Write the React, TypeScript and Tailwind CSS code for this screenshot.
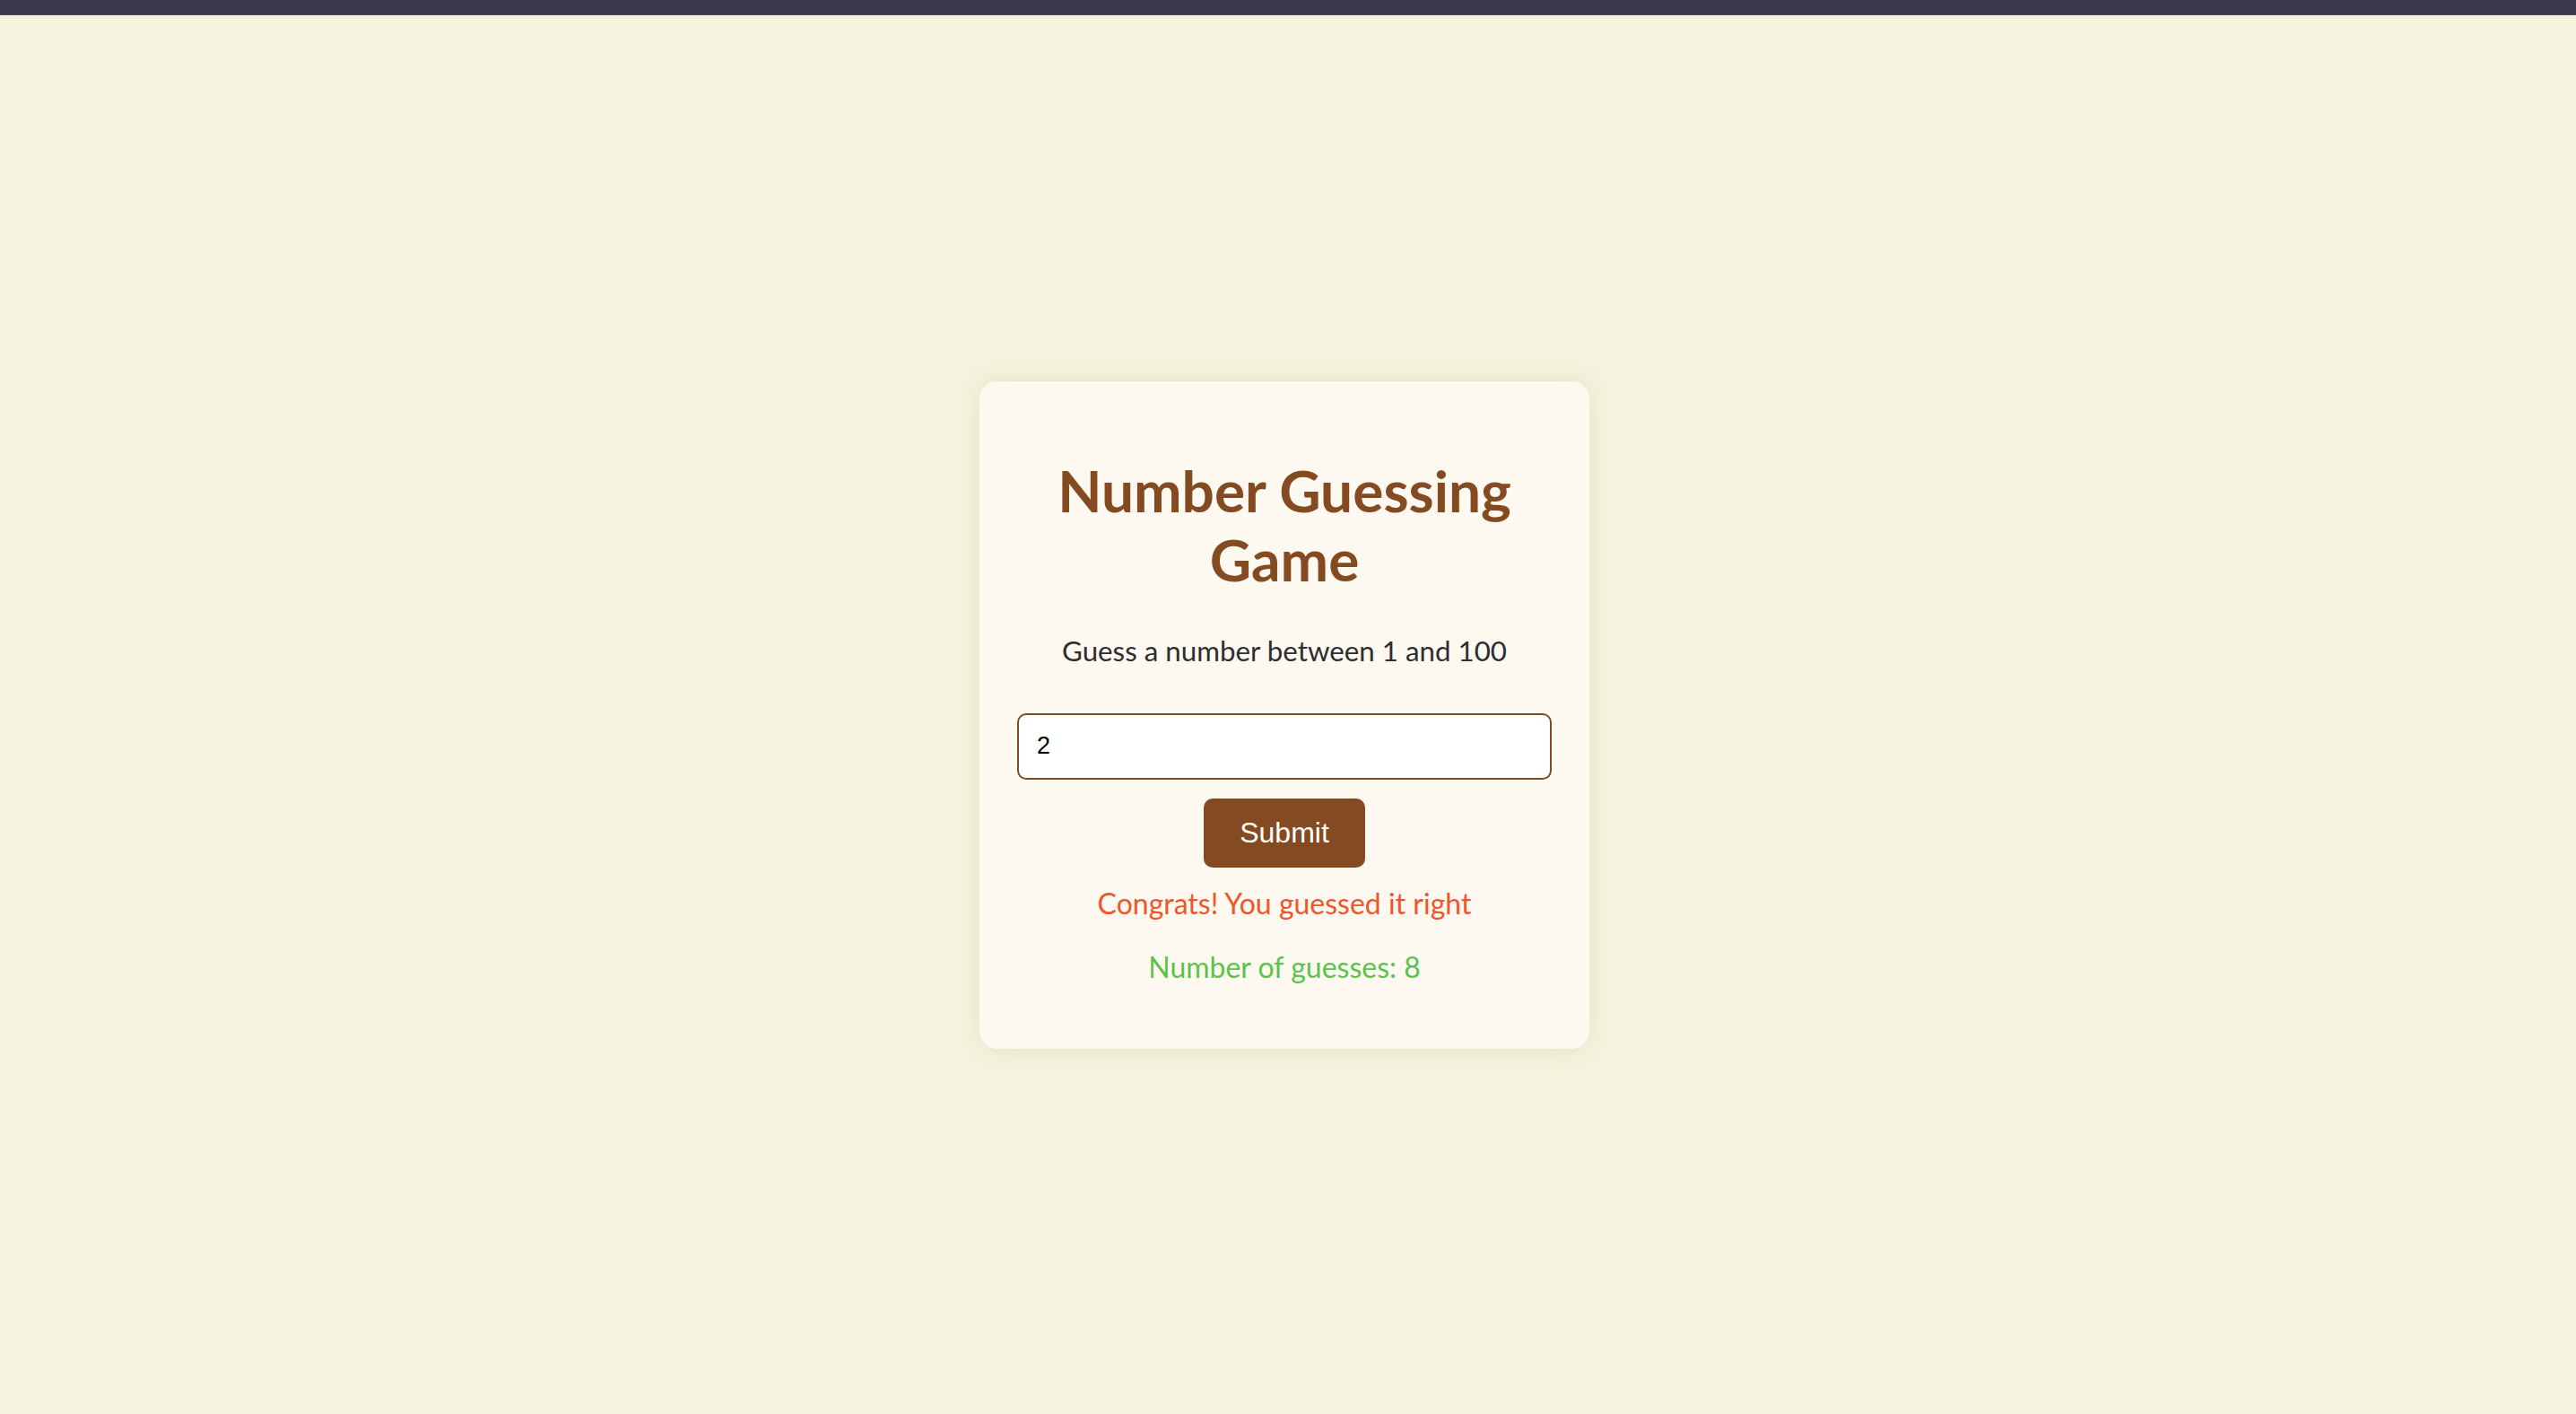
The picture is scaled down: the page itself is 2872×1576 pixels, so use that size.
import { useState } from 'react';

export default function App() {
  const [guess, setGuess] = useState('2');
  const [message] = useState('Congrats! You guessed it right');
  const [count] = useState(8);

  return (
    <div className="flex min-h-screen flex-col bg-[#f4f4de]">
      {/* window top strip */}
      <div className="h-[17px] shrink-0 border-b border-[#4a4a5a] bg-[#3a3a4c]" />

      <main className="flex flex-1 items-center justify-center pr-[8px]">
        <div className="flex w-[680px] flex-col items-center rounded-[20px] bg-[#fdf9f1] px-[42px] pt-[83px] pb-[72px] text-center shadow-[0_0_24px_rgba(180,170,120,0.25)] font-['Lato','Noto_Sans',sans-serif]">
          <h1 className="text-[64px] leading-[77px] font-bold text-[#844a21]">
            Number Guessing Game
          </h1>

          <p className="mt-[44px] text-[31.3px] leading-[38px] text-[#2e2e2e]">
            Guess a number between 1 and 100
          </p>

          <input
            type="number"
            value={guess}
            onChange={(e) => setGuess(e.target.value)}
            className="mt-[51px] h-[74px] w-full rounded-[10px] border-2 border-[#844a21] bg-white px-[20px] text-[27px] text-black outline-none font-['Liberation_Sans',Arial,sans-serif] [appearance:textfield] [&::-webkit-inner-spin-button]:appearance-none [&::-webkit-outer-spin-button]:appearance-none"
          />

          <button
            type="button"
            className="mt-[21px] h-[77px] w-[180px] rounded-[10px] bg-[#844a21] text-[32px] text-white font-['Liberation_Sans',Arial,sans-serif]"
          >
            Submit
          </button>

          <p className="mt-[21px] text-[32px] leading-[38px] text-[#f0552b]">{message}</p>

          <p className="mt-[33px] text-[32px] leading-[38px] text-[#5cc24b]">
            Number of guesses: {count}
          </p>
        </div>
      </main>
    </div>
  );
}
